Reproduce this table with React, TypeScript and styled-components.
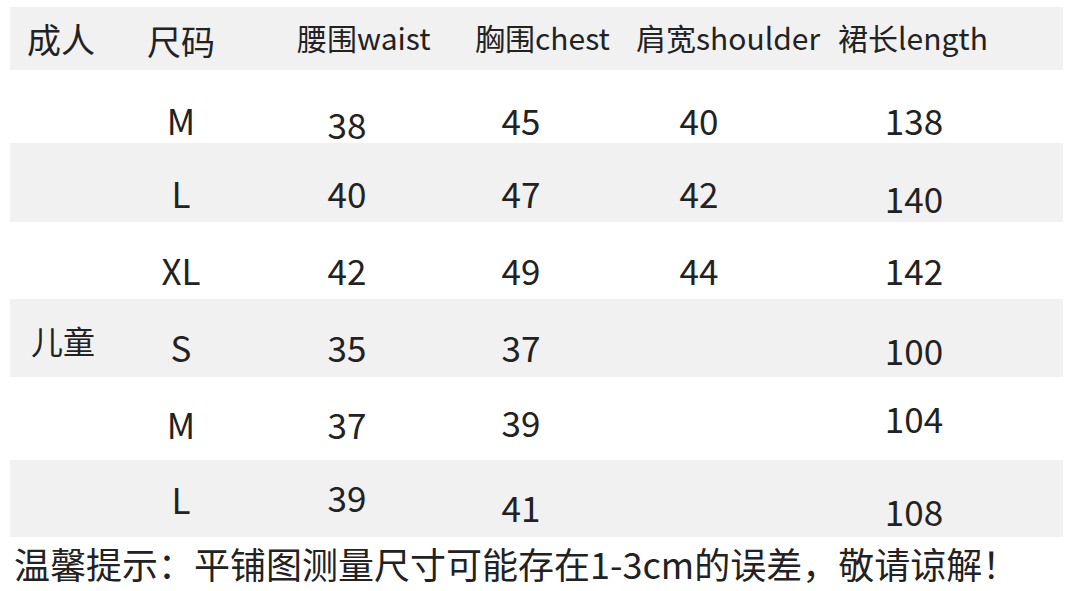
import React from 'react';
import styled, { createGlobalStyle } from 'styled-components';

const GlobalStyle = createGlobalStyle`
  html, body {
    margin: 0;
    padding: 0;
    background: #fff;
  }
  body {
    font-family: "Noto Sans CJK SC", "Noto Sans", sans-serif;
    color: #222;
  }
`;

const Page = styled.div`
  width: 1086px;
  height: 591px;
  padding-top: 7px;
  box-sizing: border-box;
  overflow: hidden;
`;

const Table = styled.div`
  margin-left: 10px;
  width: 1053px;
  display: flex;
  flex-direction: column;
`;

const HeaderRow = styled.div`
  display: grid;
  grid-template-columns: 120px 150px 178px 161px 202px 1fr;
  height: 63px;
  padding: 15px 0 0 17px;
  box-sizing: border-box;
  background: #f1f1f1;
`;

const HeadCell = styled.div<{ $big?: boolean; $dy?: number }>`
  font-size: ${(p) => (p.$big ? '34px' : '30px')};
  line-height: 1;
  white-space: nowrap;
  transform: translateY(${(p) => p.$dy ?? 0}px);
`;

const Row = styled.div<{ $h: number; $pt: number; $shade?: boolean }>`
  display: grid;
  grid-template-columns: 120px 102px 230px 118px 238px 192px 1fr;
  height: ${(p) => p.$h}px;
  padding-top: ${(p) => p.$pt}px;
  box-sizing: border-box;
  background: ${(p) => (p.$shade ? '#f1f1f1' : '#fff')};
`;

const Cell = styled.div<{ $dy?: number }>`
  font-size: 35px;
  line-height: 1;
  text-align: center;
  white-space: nowrap;
  transform: translateY(${(p) => p.$dy ?? 0}px);
`;

const GroupCell = styled.div<{ $dy?: number }>`
  font-size: 32px;
  line-height: 1;
  padding-left: 21px;
  white-space: nowrap;
  transform: translateY(${(p) => p.$dy ?? 0}px);
`;

const Note = styled.div`
  margin: 8px 0 0 14px;
  font-size: 36px;
  line-height: 1;
  white-space: nowrap;
`;

type RowData = {
  group?: string;
  size: string;
  cells: (string | [string, number])[];
  h: number;
  pt: number;
  shade?: boolean;
  groupDy?: number;
};

const rows: RowData[] = [
  { size: 'M', cells: [['38', 4], '45', '40', '138'], h: 73, pt: 32 },
  { size: 'L', cells: ['40', '47', '42', ['140', 5]], h: 79, pt: 32, shade: true },
  { size: 'XL', cells: ['42', '49', '44', '142'], h: 77, pt: 30 },
  { group: '儿童', groupDy: -5, size: 'S', cells: ['35', '37', '', ['100', 3]], h: 78, pt: 30, shade: true },
  { size: 'M', cells: ['37', ['39', -2], '', ['104', -6]], h: 83, pt: 29 },
  { size: 'L', cells: [['39', -2], ['41', 8], '', ['108', 12]], h: 77, pt: 21, shade: true },
];

export default function App() {
  return (
    <Page>
      <GlobalStyle />
      <Table>
        <HeaderRow>
          <HeadCell $big>成人</HeadCell>
          <HeadCell $big $dy={2}>尺码</HeadCell>
          <HeadCell>腰围waist</HeadCell>
          <HeadCell>胸围chest</HeadCell>
          <HeadCell>肩宽shoulder</HeadCell>
          <HeadCell>裙长length</HeadCell>
        </HeaderRow>
        {rows.map((r, i) => (
          <Row key={i} $h={r.h} $pt={r.pt} $shade={r.shade}>
            <GroupCell $dy={r.groupDy}>{r.group ?? ''}</GroupCell>
            <Cell>{r.size}</Cell>
            {r.cells.map((c, j) => {
              const [text, dy] = Array.isArray(c) ? c : [c, 0];
              return (
                <Cell key={j} $dy={dy}>
                  {text}
                </Cell>
              );
            })}
          </Row>
        ))}
      </Table>
      <Note>温馨提示：平铺图测量尺寸可能存在1-3cm的误差，敬请谅解！</Note>
    </Page>
  );
}
